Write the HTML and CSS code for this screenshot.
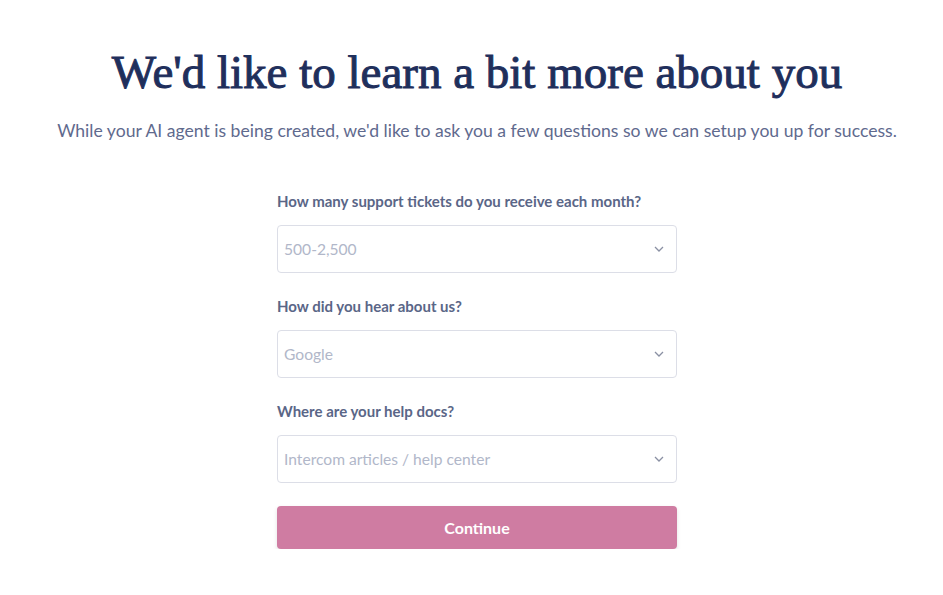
FILE: index.html
```html
<!DOCTYPE html>
<html lang="en">
<head>
<meta charset="utf-8">
<title>Onboarding</title>
<link rel="stylesheet" href="styles.css">
</head>
<body>
<main class="page">
  <h1 class="title">We'd like to learn a bit more about you</h1>
  <p class="subtitle">While your AI agent is being created, we'd like to ask you a few questions so we can setup you up for success.</p>
  <form class="form">
    <div class="field">
      <label class="label">How many support tickets do you receive each month?</label>
      <div class="select"><span class="placeholder">500-2,500</span><svg class="chev" width="10" height="6" viewBox="0 0 10 6"><path d="M1 1l4 4 4-4" fill="none" stroke="#8a90a3" stroke-width="1.3"/></svg></div>
    </div>
    <div class="field">
      <label class="label">How did you hear about us?</label>
      <div class="select"><span class="placeholder">Google</span><svg class="chev" width="10" height="6" viewBox="0 0 10 6"><path d="M1 1l4 4 4-4" fill="none" stroke="#8a90a3" stroke-width="1.3"/></svg></div>
    </div>
    <div class="field">
      <label class="label">Where are your help docs?</label>
      <div class="select"><span class="placeholder">Intercom articles / help center</span><svg class="chev" width="10" height="6" viewBox="0 0 10 6"><path d="M1 1l4 4 4-4" fill="none" stroke="#8a90a3" stroke-width="1.3"/></svg></div>
    </div>
    <button type="button" class="btn">Continue</button>
  </form>
</main>
</body>
</html>
```

FILE: styles.css
```css
html, body { margin: 0; padding: 0; background: #fff; }
body { font-family: Lato, "Open Sans", sans-serif; }
.page { display: flex; flex-direction: column; align-items: center; padding-top: 40px; padding-left: 11px; }
.title {
  font-family: "Liberation Serif", "Times New Roman", serif;
  font-weight: 400;
  -webkit-text-stroke: 1px #1f2f5c;
  font-size: 47px;
  line-height: 64px;
  color: #1f2f5c;
  margin: 0;
}
.subtitle {
  margin: 15px 0 0;
  font-size: 17.6px;
  line-height: 24px;
  color: #5f6a8e;
}
.form { width: 400px; margin-top: 49px; display: flex; flex-direction: column; }
.field { display: flex; flex-direction: column; margin-bottom: 24px; }
.label { font-size: 15px; font-weight: 700; color: #5a6687; line-height: 18px; margin-bottom: 15px; }
.select {
  height: 46px;
  border: 1px solid #dcdee7;
  border-radius: 4px;
  display: flex; align-items: center; justify-content: space-between;
  padding: 0 12px 0 6px;
}
.placeholder { font-size: 15.6px; color: #b1b7c9; }
.chev { display: block; }
.btn {
  margin-top: -1px;
  height: 43px;
  border: none;
  border-radius: 4px;
  background: #cf7ca2;
  color: #fff;
  font-family: Lato, sans-serif;
  font-weight: 700;
  font-size: 16px;
  box-shadow: 0 2px 4px rgba(0,0,0,0.12);
}
```
